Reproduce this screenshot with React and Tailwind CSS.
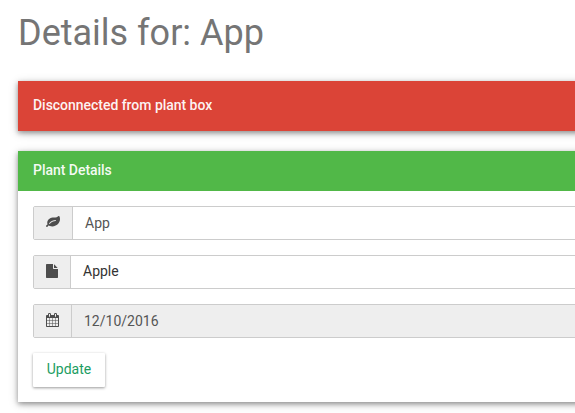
import React from 'react';

const icons = {
  leaf: {
    box: '0 0 1792 1792',
    size: 'w-[14px]',
    path: 'M1280 704q0-26-19-45t-45-19q-172 0-318 49.500t-259.500 134-235.500 219.500q-19 21-19 45 0 26 19 45t45 19q24 0 45-19 27-24 74-71t67-66q137-124 268.500-176t313.500-52q26 0 45-19t19-45zm512-198q0 95-20 193-46 224-184.500 383t-357.500 268q-214 108-438 108-148 0-286-47-15-5-88-42t-96-37q-16 0-39.500 32t-45 70-52.500 70-60 32q-43 0-63.500-17.500t-45.500-59.500q-2-4-6-11t-5.500-10-3-9.500-1.500-13.500q0-35 31-73.500t68-65.500 68-56 31-48q0-4-14-38t-16-44q-9-51-9-104 0-115 43.500-220t119-184.500 170.500-139 204-95.500q55-18 145-25.500t179.500-9 178.500-6 163.500-24 113.500-56.500l29.500-29.500t29.500-28 27-20 36.500-16 43.500-4.500q39 0 70.500 46t47.500 112 24 124 8 96z',
  },
  file: {
    box: '128 0 1536 1792',
    size: 'w-[12px]',
    path: 'M1152 512v-472q22 14 36 28l408 408q14 14 28 36h-472zm-128 32q0 40 28 68t68 28h544v1056q0 40-28 68t-68 28h-1344q-40 0-68-28t-28-68v-1600q0-40 28-68t68-28h800v544z',
  },
  calendar: {
    box: '64 0 1664 1792',
    size: 'w-[13px]',
    path: 'M192 1664h288v-288h-288v288zm352 0h320v-288h-320v288zm-352-352h288v-320h-288v320zm352 0h320v-320h-320v320zm-352-384h288v-288h-288v288zm736 736h320v-288h-320v288zm-384-736h320v-288h-320v288zm768 736h288v-288h-288v288zm-384-352h320v-320h-320v320zm-352-864v-288q0-13-9.500-22.500t-22.500-9.500h-64q-13 0-22.500 9.500t-9.500 22.500v288q0 13 9.500 22.500t22.500 9.500h64q13 0 22.500-9.500t9.500-22.500zm736 864h288v-320h-288v320zm-384-384h320v-288h-320v288zm384 0h288v-288h-288v288zm32-480v-288q0-13-9.500-22.500t-22.500-9.500h-64q-13 0-22.500 9.500t-9.500 22.500v288q0 13 9.500 22.500t22.500 9.500h64q13 0 22.500-9.500t9.500-22.500zm384-64v1280q0 52-38 90t-90 38h-1408q-52 0-90-38t-38-90v-1280q0-52 38-90t90-38h128v-96q0-66 47-113t113-47h64q66 0 113 47t47 113v96h384v-96q0-66 47-113t113-47h64q66 0 113 47t47 113v96h128q52 0 90 38t38 90z',
  },
};

function Field({ icon, children, className }) {
  const { box, size, path } = icons[icon];
  return (
    <div className="flex h-[34px] rounded-[2px] border border-[#ccc]">
      <span className="flex shrink-0 items-start border-r border-[#ccc] bg-[#eee] px-3 pt-[8px]">
        <svg viewBox={box} className={`h-[14px] fill-[#4d4d4d] ${size}`}>
          <path d={path} />
        </svg>
      </span>
      <div className={`grow px-3 text-[14px] leading-5 ${className}`}>{children}</div>
    </div>
  );
}

export default function App() {
  return (
    <div className="h-[413px] overflow-hidden bg-white pl-[18px] font-['Roboto',sans-serif]">
      <div className="w-[640px]">
        <h1 className="pt-[13px] text-[36px] leading-[40px] text-[#757575]">Details for: App</h1>
        <div className="mt-[28px] h-[50px] bg-[#db4437] px-[15px] pt-[14px] text-[14px] leading-5 tracking-[-0.03px] text-white/95 font-medium shadow-[0_2px_10px_rgba(0,0,0,0.16),0_2px_5px_rgba(0,0,0,0.36)]">
          Disconnected from plant box
        </div>
        <section className="mt-5 bg-white shadow-[0_2px_10px_rgba(0,0,0,0.16),0_2px_5px_rgba(0,0,0,0.36)]">
          <header className="h-10 bg-[#51b848] px-[15px] pt-[9px] text-[14px] font-medium leading-5 tracking-[-0.03px] text-white/95">
            Plant Details
          </header>
          <div className="flex flex-col gap-[15px] p-[15px]">
            <Field icon="leaf" className="pt-[6px] text-[#555]">App</Field>
            <Field icon="file" className="pt-[5px] text-[#333]">Apple</Field>
            <Field icon="calendar" className="bg-[#eee] pt-[6px] text-[#555]">12/10/2016</Field>
            <button className="h-[34px] w-[72px] rounded-[1px] bg-white pb-[2px] text-[14px] leading-5 text-[#1c9d63] shadow-[0_1px_3px_rgba(0,0,0,0.4)]">
              Update
            </button>
          </div>
        </section>
      </div>
    </div>
  );
}
